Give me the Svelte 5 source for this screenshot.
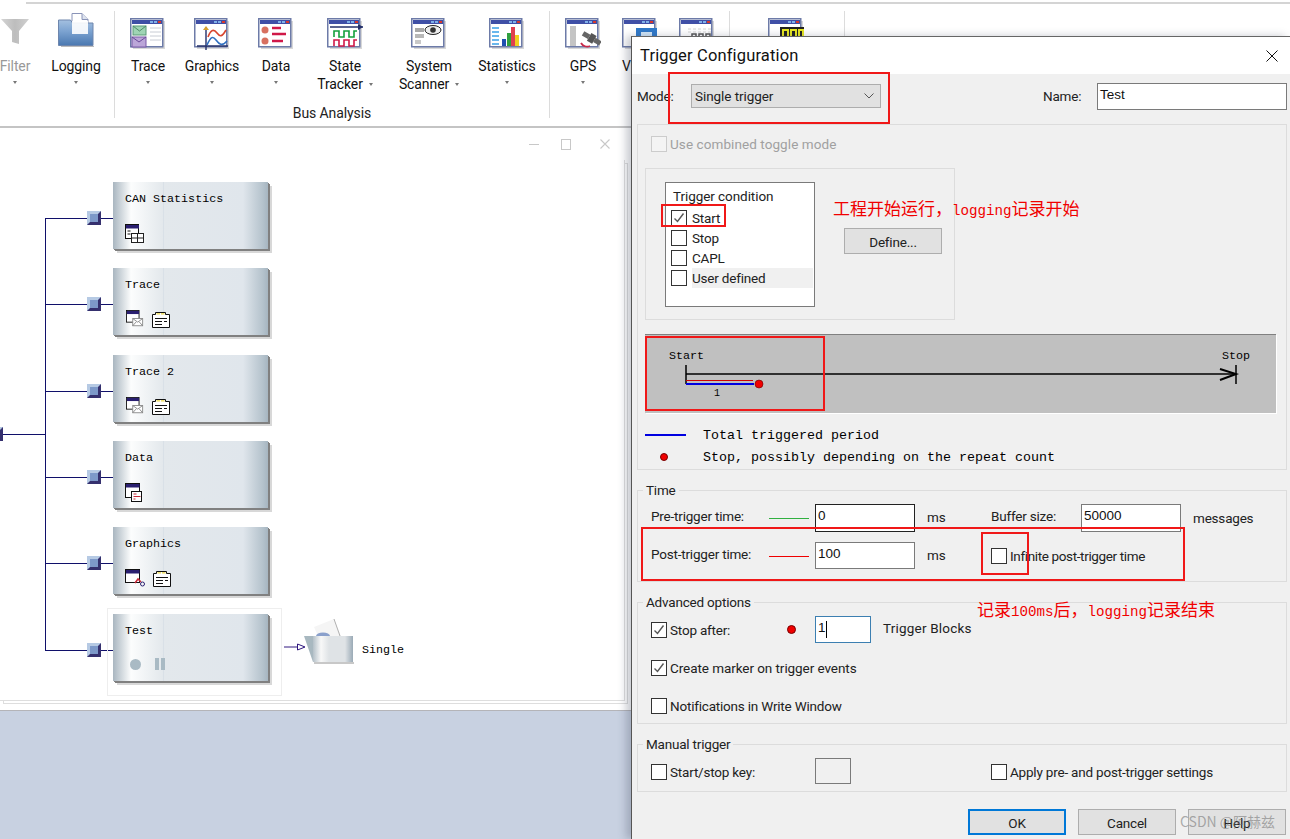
<script>
  const ribbonGroups = [
    { cls: 'g1', label: 'n', items: [
      { key: 'filter', lines: ['Filter'], w: 60, dim: true },
      { key: 'logging', lines: ['Logging'], w: 62 }
    ]},
    { cls: 'g2', label: 'Bus Analysis', items: [
      { key: 'trace', lines: ['Trace'], w: 50 },
      { key: 'graphics', lines: ['Graphics'], w: 78 },
      { key: 'data', lines: ['Data'], w: 50 },
      { key: 'state', lines: ['State', 'Tracker'], w: 88 },
      { key: 'scanner', lines: ['System', 'Scanner'], w: 80 },
      { key: 'stats', lines: ['Statistics'], w: 76 }
    ]},
    { cls: 'g3', label: '', items: [
      { key: 'gps', lines: ['GPS'], w: 56 },
      { key: 'video', lines: ['V'], w: 58, cut: true },
      { key: 'digits', lines: [''], w: 56 }
    ]},
    { cls: 'g4', label: '', items: [
      { key: 'digitsy', lines: [''], w: 88 }
    ]}
  ];
  const nodes = [
    { y: 182, wire: 218, name: 'CAN Statistics', icons: ['table'] },
    { y: 268, wire: 304, name: 'Trace', icons: ['mail', 'doc'] },
    { y: 355, wire: 391, name: 'Trace 2', icons: ['mail', 'doc'] },
    { y: 441, wire: 477, name: 'Data', icons: ['datawin'] },
    { y: 527, wire: 563, name: 'Graphics', icons: ['graph', 'doc'] },
    { y: 614, wire: 650, name: 'Test', icons: ['rec'] }
  ];
  const conditions = [
    { t: 'Start', on: true },
    { t: 'Stop', on: false },
    { t: 'CAPL', on: false },
    { t: 'User defined', on: false, hl: true }
  ];
</script>

{#snippet win(inner)}
  <svg class="ricon" viewBox="0 0 36 32" width="36" height="32">
    <rect x="3" y="3" width="32" height="28" fill="#b8b8b8" opacity=".55" />
    <rect x=".75" y=".75" width="32" height="28" fill="#fff" stroke="#6d7ba8" stroke-width="1.5" />
    <rect x="2" y="2" width="30" height="4" fill="#3f4fa6" />
    <rect x="20" y="3" width="3" height="2" fill="#7fb0e8" />
    <rect x="24" y="3" width="3" height="2" fill="#7fb0e8" />
    <rect x="28" y="3" width="3" height="2" fill="#d8382c" />
    {@render inner()}
  </svg>
{/snippet}

{#snippet traceI()}
  <rect x="3" y="8" width="13" height="9" fill="#9fd4b4" stroke="#5b9a78" />
  <path d="M3 8l6.500 5 6.500-5" fill="none" stroke="#4f8a68" />
  <rect x="2" y="19" width="14" height="10" fill="#bba6d8" stroke="#7a5aa8" />
  <path d="M2 19l7 5 7-5" fill="none" stroke="#6a4a98" />
  <path d="M20 10h11M20 14h11M20 18h11M20 22h11" stroke="#c8ccd4" />
{/snippet}
{#snippet graphI()}
  <path d="M12 9v23M3 28h31" stroke="#24306a" stroke-width="1.400" fill="none" />
  <path d="M14 19c3-8 6-8 9-4s5 4 9-3" stroke="#d8452e" stroke-width="1.600" fill="none" />
  <path d="M13 27c4-9 6-9 9-5s6 7 11 1" stroke="#2f6fc0" stroke-width="1.600" fill="none" />
  <path d="M9 12l3-4 3 4" fill="#d8a02e" />
{/snippet}
{#snippet dataI()}
  <circle cx="7" cy="12" r="3.500" fill="#d87060" /><circle cx="7" cy="23" r="3.500" fill="#d87060" />
  <path d="M14 10h9M14 16h14M14 23h11" stroke="#d01848" stroke-width="2.400" />
{/snippet}
{#snippet stateI()}
  <path d="M3 9h33" stroke="#24306a" stroke-width="1.400" /><path d="M31 6l5 3-5 3" fill="#24306a" />
  <path d="M7 19v-6h5v6h5v-6h5v6h5v-6h3" stroke="#14a03c" stroke-width="1.600" fill="none" />
  <path d="M7 28v-6h5v6h5v-6h5v6h5v-6h3" stroke="#d01848" stroke-width="1.600" fill="none" />
{/snippet}
{#snippet scanI()}
  <rect x="4" y="10" width="9" height="4" fill="#a8a8a8" /><rect x="4" y="16" width="9" height="4" fill="#b8b8b8" /><rect x="4" y="22" width="6" height="4" fill="#c8c8c8" />
  <ellipse cx="22" cy="12" rx="8" ry="4.500" fill="#eee" stroke="#222" /><circle cx="22" cy="12" r="2.800" fill="#333" />
{/snippet}
{#snippet statsI()}
  <path d="M3 10h7M3 14h7M3 18h7M3 22h7M3 26h7" stroke="#3aa0e8" stroke-width="1.500" />
  <rect x="13" y="21" width="4" height="7" fill="#2050b0" /><rect x="18" y="15" width="4" height="13" fill="#30a040" />
  <rect x="22" y="9" width="4" height="19" fill="#e04050" /><rect x="26" y="17" width="4" height="11" fill="#f0d020" />
{/snippet}
{#snippet gpsI()}
  <rect x="5" y="8" width="6" height="20" fill="#c4c4c4" />
  <path d="M16 25a7 7 0 0 0 9 3" stroke="#c82848" stroke-width="1.800" fill="none" />
  <g transform="rotate(30 27 20)"><rect x="17" y="18" width="7" height="5" fill="#666" /><rect x="30" y="18" width="7" height="5" fill="#666" /><rect x="24" y="16" width="6" height="9" fill="#555" /></g>
{/snippet}
{#snippet videoI()}
  <rect x="14" y="10" width="21" height="16" fill="#2f78c8" /><rect x="19" y="14" width="11" height="8" fill="#cfe4f6" />
{/snippet}
{#snippet digitsI()}
  <path d="M9 11h26M9 14h26" stroke="#d4d4d4" stroke-dasharray="3 2" />
  <path d="M13 26v-10h4v10M20 26v-10h4v10M27 26v-10h4v10" stroke="#555" stroke-width="1.500" fill="none" />
{/snippet}
{#snippet digitsyI()}
  <rect x="12" y="9" width="24" height="22" fill="#222" />
  <path d="M15 29v-17h5v17M23 29v-17h5v17M31 29v-17h4v17" stroke="#e8e820" stroke-width="2" fill="none" />
{/snippet}

{#snippet ribbonIcon(key)}
  {#if key === 'filter'}
    <svg class="ricon" viewBox="0 0 36 32" width="36" height="32">
      <defs><linearGradient id="fl"><stop offset="0" stop-color="#d4d4d4" /><stop offset=".5" stop-color="#bdbdbd" /><stop offset="1" stop-color="#d0d0d0" /></linearGradient></defs>
      <path d="M4 1h28L22 13v13l-7-2V13z" fill="url(#fl)" />
    </svg>
  {:else if key === 'logging'}
    <svg class="ricon logging" viewBox="0 0 36 34" width="36" height="34">
      <defs><linearGradient id="lg" x2="0" y2="1"><stop offset="0" stop-color="#a4c0e0" /><stop offset=".45" stop-color="#7ba2d0" /><stop offset="1" stop-color="#4a78b0" /></linearGradient></defs>
      <path d="M14 .5h10l6 6v16H14z" fill="#fff" stroke="#8a94b8" />
      <path d="M24 .5v6h6" fill="#dde3ef" stroke="#8a94b8" />
      <path d="M.5 7h12l2 3h20.500v22.500H.5z" fill="url(#lg)" stroke="#6e86ad" />
      <rect x="14" y="8" width="16" height="13" fill="#fff" opacity=".9" />
      <rect x="3" y="33" width="33" height="1" fill="#bbb" />
    </svg>
  {:else if key === 'trace'}{@render win(traceI)}
  {:else if key === 'graphics'}{@render win(graphI)}
  {:else if key === 'data'}{@render win(dataI)}
  {:else if key === 'state'}{@render win(stateI)}
  {:else if key === 'scanner'}{@render win(scanI)}
  {:else if key === 'stats'}{@render win(statsI)}
  {:else if key === 'gps'}{@render win(gpsI)}
  {:else if key === 'video'}{@render win(videoI)}
  {:else if key === 'digits'}{@render win(digitsI)}
  {:else if key === 'digitsy'}{@render win(digitsyI)}
  {/if}
{/snippet}

{#snippet nodeIcon(k)}
  {#if k === 'table'}
    <svg class="nic" viewBox="0 0 20 20" width="20" height="20">
      <rect x=".5" y=".5" width="13" height="14" fill="#fff" stroke="#111" /><rect x="1" y="1" width="13" height="3.500" fill="#2a1f70" />
      <path d="M2.500 7h3M2.500 10h3" stroke="#111" />
      <rect x="6.500" y="9.500" width="12" height="9" fill="#fff" stroke="#222" /><path d="M6.500 14h12M12.500 9.500v9" stroke="#222" />
    </svg>
  {:else if k === 'mail'}
    <svg class="nic" viewBox="0 0 20 20" width="20" height="18">
      <rect x=".5" y=".5" width="14" height="13" fill="#fff" stroke="#111" /><rect x="1" y="1" width="13.500" height="3.500" fill="#2a1f70" />
      <rect x="7.500" y="9.500" width="11" height="8" fill="#fff" stroke="#888" /><path d="M7.500 9.500l5.500 4 5.500-4M7.500 17.500l4-4.500M18.500 17.500l-4-4.500" fill="none" stroke="#888" />
    </svg>
  {:else if k === 'doc'}
    <svg class="nic" viewBox="0 0 18 17" width="18" height="17">
      <path d="M.5 3.500h3V1.500h10v2h4v13H.5z" fill="#fff" stroke="#111" /><rect x="4.500" y="2" width="3.500" height="1.600" fill="#f0e070" /><rect x="9" y="2" width="3.500" height="1.600" fill="#f0e070" />
      <path d="M3 7.500h12M3 10.500h7M12 10.500h3M3 13.500h7" stroke="#111" />
    </svg>
  {:else if k === 'datawin'}
    <svg class="nic" viewBox="0 0 20 20" width="20" height="20">
      <rect x=".5" y=".5" width="14" height="14" fill="#fff" stroke="#111" /><rect x="1" y="1" width="13.500" height="3.500" fill="#2a1f70" />
      <rect x="6.500" y="8.500" width="10" height="10" fill="#fff" stroke="#111" /><path d="M8.500 11h3M8.500 13.500h7M8.500 16h2" stroke="#c82838" />
    </svg>
  {:else if k === 'graph'}
    <svg class="nic" viewBox="0 0 21 18" width="21" height="18">
      <rect x=".5" y=".5" width="14" height="13" fill="#fff" stroke="#111" /><rect x="1" y="1" width="13.500" height="3.500" fill="#2a1f70" />
      <path d="M10 14l3-4 3 3" fill="none" stroke="#c82838" stroke-width="1.500" /><circle cx="17.500" cy="15" r="2" fill="none" stroke="#2a1f70" />
    </svg>
  {:else if k === 'rec'}
    <span class="rec"></span><span class="pause"><i></i><i></i></span>
  {/if}
{/snippet}

{#snippet cb(on, cls = '')}
  <span class="cb {cls}">
    {#if on}<svg viewBox="0 0 14 14" width="14" height="14"><path d="M2.500 7.500l3 3 6-8" fill="none" stroke="#555" stroke-width="1.400" /></svg>{/if}
  </span>
{/snippet}

<div class="page">
  <header class="ribbon">
    <div class="topline"></div>
    <div class="groups">
      {#each ribbonGroups as g}
        <section class="rgroup {g.cls}">
          <div class="ritems">
            {#each g.items as it}
              <div class="ritem" class:dim={it.dim} class:cut={it.cut} style="width:{it.w}px">
                {@render ribbonIcon(it.key)}
                {#if it.lines.length === 2}
                  <span class="rlabel">{it.lines[0]}</span>
                  <span class="rlabel">{it.lines[1]}<b class="arrow inline"></b></span>
                {:else}
                  <span class="rlabel">{it.lines[0]}</span>
                  <b class="arrow"></b>
                {/if}
              </div>
            {/each}
          </div>
          <div class="gname">{g.label}</div>
        </section>
      {/each}
    </div>
  </header>

  <main class="window">
    <div class="wbar">
      <span class="ctl min"></span>
      <span class="ctl max"></span>
      <svg class="ctl close" viewBox="0 0 10 10" width="10" height="10"><path d="M.5.500l9 9M9.500.500l-9 9" stroke="#c8c8c8" stroke-width="1.100" /></svg>
    </div>
    <div class="canvas">
      <div class="bus"></div>
      <div class="wire in" style="top:{434 - 160}px"></div>
      <div class="port stub" style="top:{434 - 160 - 7}px"></div>
      {#each nodes as n}
        <div class="wire" style="top:{n.wire - 160}px"></div>
        <div class="port" style="top:{n.wire - 160 - 7}px"></div>
        <article class="node" style="top:{n.y - 160}px">
          <h3>{n.name}</h3>
          <div class="nicons">
            {#each n.icons as k}{@render nodeIcon(k)}{/each}
          </div>
        </article>
      {/each}
      <div class="selected"></div>
      <svg class="sink" viewBox="0 0 70 46" width="70" height="46">
        <path d="M0 28h13" stroke="#301880" />
        <path d="M13.500 25l7.500 3-7.500 3z" fill="#fff" stroke="#301880" />
        <path d="M30 8l20-8 7 17H34z" fill="#f5f5f5" />
        <path d="M50 0l6 17" stroke="#b0b0b0" fill="none" />
        <ellipse cx="39" cy="17" rx="7" ry="3.500" fill="#8aa0cc" />
        <path d="M20 17h9v26z" fill="#a8b8c0" />
        <defs><linearGradient id="fg"><stop offset="0" stop-color="#b4c0c8" /><stop offset=".2" stop-color="#f8f8f8" /><stop offset=".4" stop-color="#dfe3e6" /><stop offset=".8" stop-color="#dfe3e6" /><stop offset="1" stop-color="#9aaab6" /></linearGradient></defs>
        <rect x="29" y="17" width="40" height="26" fill="url(#fg)" />
        <path d="M30 44h40" stroke="#c8c8c8" stroke-width="2" />
      </svg>
      <span class="sinklabel">Single</span>
    </div>
    <div class="wfoot"></div>
  </main>
  <div class="desk"></div>

  <div class="dialog">
    <div class="dtitle">
      <span>Trigger Configuration</span>
      <svg viewBox="0 0 12 12" width="12" height="12"><path d="M.5.500l11 11M11.500.500l-11 11" stroke="#111" /></svg>
    </div>
    <div class="dbody">
      <div class="moderow">
        <span class="t modelabel">Mode:</span>
        <div class="combo">
          <span class="t sp">Single trigger</span>
          <svg viewBox="0 0 10 6" width="10" height="6"><path d="M.5.500l4.500 4.500 4.500-4.500" fill="none" stroke="#555" /></svg>
        </div>
        <span class="t namelabel">Name:</span>
        <div class="input name"><span class="arial">Test</span></div>
      </div>

      <section class="panel main">
        <label class="toggle">{@render cb(false, 'dis')}<span class="t gray">Use combined toggle mode</span></label>
        <div class="cond">
          <div class="list">
            <div class="lhead t sp">Trigger condition</div>
            {#each conditions as c}
              <div class="lrow">{@render cb(c.on)}<span class="t" class:hl={c.hl}>{c.t}</span></div>
            {/each}
          </div>
          <button class="btn define"><span class="t">Define...</span></button>
        </div>
        <div class="diagram">
          <svg viewBox="0 0 631 79" width="631" height="79">
            <path d="M41 31v19M41 40h550M591 31v19" stroke="#000" stroke-width="1.500" fill="none" />
            <path d="M575 35l16 5-16 6" fill="none" stroke="#000" stroke-width="2" />
            <path d="M41 46.500h67" stroke="#d00000" />
            <path d="M41 50h68" stroke="#0000e0" stroke-width="2" />
            <circle cx="114" cy="50" r="4" fill="#f00000" stroke="#600" stroke-width=".6" />
          </svg>
          <span class="mono dl start">Start</span>
          <span class="mono dl stop">Stop</span>
          <span class="mono dl one">1</span>
        </div>
        <div class="legend">
          <div class="lgrow"><span class="lgkey"><i class="blue"></i></span><span class="mono big">Total triggered period</span></div>
          <div class="lgrow"><span class="lgkey"><i class="dot"></i></span><span class="mono big">Stop, possibly depending on the repeat count</span></div>
        </div>
      </section>

      <section class="panel grp time">
        <span class="t lg">Time</span>
        <div class="fgrid">
          <span class="t up">Pre-trigger time:</span><i class="ln greenline"></i>
          <div class="input focus"><span class="arial">0</span></div>
          <span class="t ms">ms</span>
          <span class="t up">Buffer size:</span>
          <div class="input"><span class="arial">50000</span></div>
          <span class="t msg">messages</span>

          <span class="t up">Post-trigger time:</span><i class="ln redline"></i>
          <div class="input"><span class="arial">100</span></div>
          <span class="t ms">ms</span>
          <label class="chk span3">{@render cb(false)}<span class="t tight">Infinite post-trigger time</span></label>
        </div>
      </section>

      <section class="panel grp adv">
        <span class="t lg">Advanced options</span>
        <div class="advrow">
          <label class="chk a1">{@render cb(true)}<span class="t">Stop after:</span></label>
          <i class="dot reddot"></i>
          <div class="input blocks"><span class="arial">1</span><i class="caret"></i></div>
          <span class="t tb">Trigger Blocks</span>
        </div>
        <label class="chk m2">{@render cb(true)}<span class="t sp">Create marker on trigger events</span></label>
        <label class="chk m3">{@render cb(false)}<span class="t">Notifications in Write Window</span></label>
      </section>

      <section class="panel grp man">
        <span class="t lg">Manual trigger</span>
        <div class="manrow">
          <label class="chk a1 wide">{@render cb(false)}<span class="t">Start/stop key:</span></label>
          <div class="keybox"></div>
          <label class="chk apply">{@render cb(false)}<span class="t">Apply pre- and post-trigger settings</span></label>
        </div>
      </section>

      <div class="btns">
        <button class="btn ok"><span class="t">OK</span></button>
        <button class="btn"><span class="t">Cancel</span></button>
        <button class="btn"><span class="t">Help</span></button>
      </div>
    </div>
  </div>

  <!-- annotations drawn over the screenshot -->
  <div class="mark" style="left:668px;top:72px;width:222px;height:52px"></div>
  <div class="mark" style="left:661px;top:204px;width:65px;height:23px"></div>
  <div class="mark" style="left:645px;top:336px;width:180px;height:75px"></div>
  <div class="mark" style="left:641px;top:527px;width:544px;height:54px"></div>
  <div class="mark" style="left:981px;top:532px;width:48px;height:43px"></div>
  <div class="note n1">工程开始运行，<span>logging</span>记录开始</div>
  <div class="note n2">记录<span>100ms</span>后，<span>logging</span>记录结束</div>
  <div class="wm">CSDN @阿赫兹</div>
</div>

<style>
  :global(body) { margin: 0; background: #fff; }
  .page {
    position: relative; width: 1290px; height: 839px; overflow: hidden;
    display: flex; flex-direction: column; background: #fff;
    font-family: Roboto, "Liberation Sans", sans-serif; color: #111;
  }
  .ribbon { height: 126px; box-sizing: border-box; flex: none; }
  .topline { height: 2px; margin: 2px 0 0 26px; background: #d4d4d4; }
  .groups { display: flex; margin-top: 7px; margin-left: -15px; }
  .rgroup { height: 107px; border-right: 1px solid #dcdcdc; display: flex; flex-direction: column; }
  .g1 { width: 129px; }
  .g2 { width: 434px; }
  .g3 { width: 179px; }
  .g4 { width: 114px; }
  .ritems { display: flex; height: 86px; padding-top: 7px; flex: none; }
  .g2 .ritems { padding-left: 8px; }
  .g3 .ritems { padding-left: 5px; }
  .g4 .ritems { padding-left: 12px; }
  .ritem { display: flex; flex-direction: column; align-items: center; flex: none; font-size: 14px; line-height: 18px; height: 86px; }
  .ricon { display: block; height: 32px; margin-bottom: 7px; flex: none; }
  .ricon.logging { height: 34px; margin-top: -5px; margin-bottom: 10px; }
  .dim { color: #999; }
  .rlabel { white-space: nowrap; position: relative; min-height: 18px; letter-spacing: -.1px; }
  .cut .rlabel { align-self: flex-start; margin-left: 11px; }
  .arrow { display: block; width: 0; height: 0; margin-top: 6px; border: 2.5px solid transparent; border-top: 3px solid #777; border-bottom: 0; }
  .arrow.inline { display: inline-block; margin: 0 0 2px 6px; vertical-align: middle; }
  .gname { font-size: 14px; text-align: center; line-height: 18px; color: #222; letter-spacing: -.1px; }
  .g1 .gname { position: relative; left: -63px; }

  .window { flex: none; height: 584px; border-top: 2px solid #c4c4c4; box-sizing: border-box; display: flex; flex-direction: column; background: #fff; }
  .wbar { height: 32px; flex: none; display: flex; align-items: center; padding-left: 529px; gap: 22px; box-sizing: border-box; }
  .ctl { display: block; flex: none; }
  .min { width: 10px; height: 1px; background: #c8c8c8; }
  .max { width: 8px; height: 9px; border: 1px solid #c8c8c8; }
  .close { margin-left: 7px; }
  .canvas { position: relative; width: 624px; height: 540px; flex: none; border-right: 1px solid #dedede; border-bottom: 1px solid #dedede; box-shadow: 3px 3px 0 -1px #fff, 3px 3px 0 0 #dedede; }
  .wfoot { flex: 1; }
  .desk { flex: 1; background: #c8d1e1; border-top: 1px solid #b4b4b8; }

  .bus { position: absolute; left: 45px; top: 58px; width: 1px; height: 433px; background: #10106a; }
  .wire { position: absolute; left: 45px; width: 68px; height: 1px; background: #10106a; }
  .wire.in { left: 0; width: 46px; }
  .port {
    position: absolute; left: 87px; width: 14px; height: 14px; box-sizing: border-box;
    background: #7d99c9; border: 3px solid; border-color: #b6cae4 #35306e #35306e #b6cae4;
  }
  .port.stub { left: -11px; }
  .node {
    position: absolute; left: 113px; width: 155px; height: 67px;
    background:
      linear-gradient(90deg, transparent 50px, #d9e0e7 50px, #d9e0e7 51px, transparent 51px),
      linear-gradient(90deg, #a9b6c0 0, #fcfdfd 18px, #e3e8ec 50px, #e0e6ec 130px, #b4c2cc 150px, #a6b5c0 155px);
    box-shadow: 1px 1px 0 0 #808080, 2px 2px 0 0 #808080, 4px 4px 0 0 #d8d8d8;
    box-sizing: border-box; padding: 10px 0 0 12px;
  }
  .node h3 { margin: 0; font: 400 11.7px/14px "Liberation Mono", monospace; color: #000; height: 32px; }
  .nicons { display: flex; gap: 7px; align-items: flex-end; }
  .nic { display: block; flex: none; }
  .rec { width: 11px; height: 11px; border-radius: 50%; background: #a9bac4; margin: 3px 0 0 5px; }
  .pause { display: flex; gap: 2px; margin: 2px 0 0 7px; }
  .pause i { width: 4px; height: 12px; background: #a9bac4; }
  .selected { position: absolute; left: 107px; top: 448px; width: 173px; height: 86px; border: 1px solid #eee; pointer-events: none; }
  .sink { position: absolute; left: 284px; top: 459px; }
  .sinklabel { position: absolute; left: 362px; top: 483px; font: 400 11.7px/14px "Liberation Mono", monospace; color: #000; }

  .dialog {
    position: absolute; left: 631px; top: 36px; width: 659px; height: 803px; box-sizing: border-box;
    border-top: 1px solid #666; border-left: 1px solid #555; background: #f0f0f0;
    box-shadow: -5px 0 8px rgba(60,70,90,.28); display: flex; flex-direction: column;
  }
  .dtitle { height: 37px; background: #fff; display: flex; align-items: center; justify-content: space-between; padding: 0 12px 0 8px; flex: none; font-size: 16.5px; letter-spacing: .15px; color: #111; }
  .dbody { flex: 1; padding: 0 3px 0 5px; display: flex; flex-direction: column; }
  .t { font-size: 13.5px; color: #222; white-space: nowrap; letter-spacing: -.2px; }
  .sp { letter-spacing: -.07px; }
  .tight { letter-spacing: -.36px; }
  .gray { color: #a0a0a0; letter-spacing: .08px; }
  .arial { font: 13.5px "Liberation Sans", sans-serif; color: #111; }
  .mono { font-family: "Liberation Mono", monospace; color: #000; }
  .moderow { height: 50px; flex: none; display: flex; align-items: center; box-sizing: border-box; padding-top: 10px; padding-bottom: 16px; }
  .modelabel { width: 54px; }
  .combo { width: 190px; height: 24px; box-sizing: border-box; background: #e1e1e1; border: 1px solid #adadad; display: flex; align-items: center; justify-content: space-between; padding: 0 6px 0 3px; }
  .namelabel { margin-left: 162px; width: 54px; }
  .input { background: #fff; border: 1px solid #7a7a7a; box-sizing: border-box; height: 27px; padding: 0 2px; line-height: 20px; position: relative; }
  .name { width: 190px; }
  .panel { border: 1px solid #dcdcdc; box-sizing: border-box; position: relative; flex: none; }
  .main { height: 346px; padding: 11px 0 0 13px; }
  .toggle { display: flex; align-items: center; gap: 3px; height: 16px; }
  .cb { display: flex; align-items: center; justify-content: center; width: 16px; height: 16px; box-sizing: border-box; border: 1px solid #333; background: #fff; flex: none; }
  .cb.dis { border-color: #ccc; background: #f4f4f4; }
  .cond { margin: 16px 0 0 -6px; width: 310px; height: 152px; box-sizing: border-box; border: 1px solid #dcdcdc; display: flex; align-items: flex-start; padding: 13px 0 0 19px; }
  .list { width: 150px; height: 125px; box-sizing: border-box; border: 1px solid #7a7a7a; background: #fff; padding: 0 0 0 5px; }
  .lhead { height: 25px; line-height: 27px; padding-left: 2px; }
  .lrow { height: 20px; display: flex; align-items: center; gap: 5px; }
  .hl { background: #f0f0f0; flex: 1; height: 20px; line-height: 20px; margin-right: 1px; }
  .btn { width: 98px; height: 26px; background: #e1e1e1; border: 1px solid #adadad; padding: 0; font: inherit; box-sizing: border-box; display: block; }
  .define { margin: 46px 0 0 29px; }
  .diagram {
    position: relative; margin: 14px 0 0 -6px; width: 631px; height: 79px; background: #c0c0c0;
    border-top: 1px solid #808080; box-sizing: border-box; box-shadow: 1px 1px 0 #fff;
  }
  .diagram svg { display: block; margin-top: -1px; }
  .dl { position: absolute; font-size: 11.7px; line-height: 14px; }
  .start { left: 24px; top: 14px; }
  .stop { left: 577px; top: 14px; }
  .one { left: 69px; top: 52px; font-size: 10px; }
  .legend { margin: 11px 0 0 -6px; }
  .lgrow { display: flex; align-items: center; height: 22px; }
  .lgkey { width: 58px; display: flex; align-items: center; }
  .big { font-size: 13.33px; }
  .blue { display: block; width: 41px; height: 2px; background: #0000e0; }
  .dot { display: block; width: 8px; height: 8px; border-radius: 50%; background: #f00000; border: 1px solid #700; box-sizing: border-box; }
  .lgkey .dot { margin-left: 15px; }

  .grp { margin-top: 20px; }
  .lg { position: absolute; left: 5px; top: -9px; background: #f0f0f0; padding: 0 3px; line-height: 16px; }
  .time { height: 92px; padding: 13px 0 0 13px; }
  .fgrid { display: grid; grid-template-columns: 118px 46px 100px 76px 90px 100px auto; grid-template-rows: 28px 27px; row-gap: 10px; align-items: center; }
  .ln { display: block; height: 1px; width: 40px; margin-top: 1px; }
  .greenline { background: #30b040; }
  .redline { background: #f00000; }
  .fgrid .input { height: 100%; }
  .focus { border-color: #222; }
  .up { padding-bottom: 4px; }
  .ms { padding: 0 0 2px 12px; }
  .msg { padding-left: 12px; }
  .span3 { grid-column: 5 / span 3; }
  .chk { display: flex; align-items: center; gap: 3px; }
  .adv { height: 122px; padding: 13px 0 0 13px; }
  .advrow { display: flex; align-items: center; height: 27px; }
  .a1 { width: 136px; flex: none; }
  .reddot { width: 9px; height: 9px; margin-right: 19px; flex: none; }
  .blocks { width: 56px; height: 27px; border-color: #3c7fb1; }
  .caret { position: absolute; left: 10px; top: 4px; width: 1px; height: 17px; background: #000; }
  .tb { margin: -4px 0 0 12px; letter-spacing: .2px; }
  .m2 { margin-top: 17px; height: 16px; }
  .m3 { margin-top: 22px; height: 16px; }
  .man { height: 48px; padding: 13px 0 0 13px; }
  .manrow { display: flex; align-items: center; height: 26px; }
  .manrow .chk { margin-top: 2px; }
  .wide { width: 164px; }
  .keybox { width: 36px; height: 26px; border: 1px solid #7a7a7a; box-sizing: border-box; }
  .apply { margin-left: 140px; }
  .btns { display: flex; gap: 12px; margin-top: 17px; padding-left: 331px; }
  .ok { border: 2px solid #0078d7; }

  .mark { position: absolute; box-sizing: border-box; border: 2px solid #f01818; pointer-events: none; }
  .note { position: absolute; font: 17px "Noto Sans CJK SC", sans-serif; color: #f00000; white-space: nowrap; line-height: 20px; }
  .note span { font: 14.17px "Liberation Mono", monospace; }
  .n1 { left: 833px; top: 198px; }
  .n2 { left: 977px; top: 599px; }
  .wm { position: absolute; left: 1180px; top: 811px; font: 14px "Noto Sans CJK SC", "Noto Sans", sans-serif; color: rgba(110,110,110,.55); white-space: nowrap; }
</style>
